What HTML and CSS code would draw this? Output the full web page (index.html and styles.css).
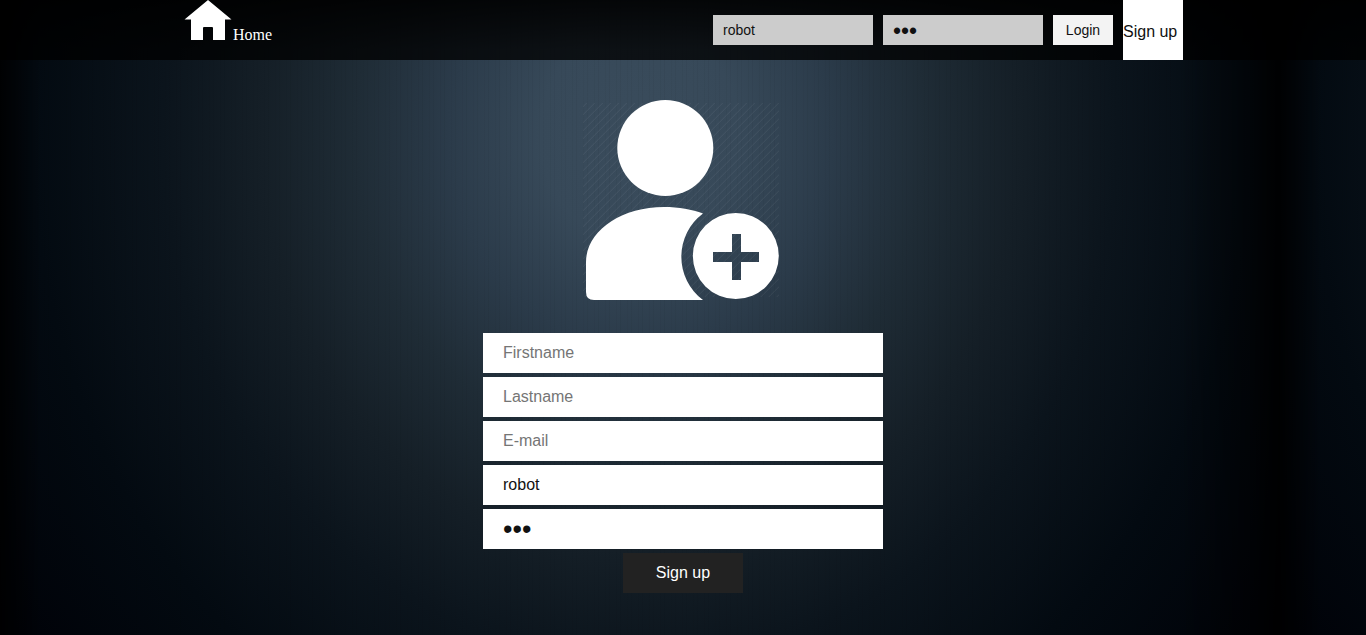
FILE: index.html
```html
<!DOCTYPE html>
<html lang="en">
<head>
<meta charset="utf-8">
<title>Sign up</title>
<link rel="stylesheet" href="styles.css">
</head>
<body>
<header class="topbar">
  <div class="topbar-inner">
    <a class="home"><svg class="home-icon" width="50" height="40" viewBox="0 0 50 40"><path fill="#fff" d="M25 0 48.500 19.500H42V40H30V28Q30 27 29 27H21Q20 27 20 28V40H8V19.500H1.500Z"/></svg><span>Home</span></a>
    <form class="login">
      <input class="login-field" type="text" value="robot">
      <input class="login-field login-password" type="password" value="abc">
      <button class="login-button" type="button">Login</button>
      <a class="signup-link">Sign up</a>
    </form>
  </div>
</header>
<main class="content">
  <svg class="user-icon" width="200" height="200" viewBox="0 0 200 200">
    <defs>
      <linearGradient id="hatch" gradientUnits="userSpaceOnUse" x1="0" y1="0" x2="4" y2="4" spreadMethod="repeat">
        <stop offset="0" stop-color="#fff" stop-opacity="0"/>
        <stop offset=".7" stop-color="#fff" stop-opacity="0"/>
        <stop offset=".85" stop-color="#fff" stop-opacity=".055"/>
        <stop offset="1" stop-color="#fff" stop-opacity="0"/>
      </linearGradient>
    </defs>
    <rect x="0" y="3" width="196" height="194" fill="url(#hatch)"/>
    <circle cx="82.300" cy="48" r="48" fill="#fff"/>
    <path fill="#fff" d="M3 162C3 132 37 107 81 107C96 107 109 109.500 120 113.500A54 54 0 0 0 120 200H11Q3 200 3 192Z"/>
    <path fill="#fff" fill-rule="evenodd" d="M152.800 113A43 43 0 0 1 152.800 199A43 43 0 0 1 152.800 113ZM149 134V152H130V162H149V180H158V162H176V152H158V134Z"/>
  </svg>
  <form class="signup">
    <input class="field" type="text" placeholder="Firstname">
    <input class="field" type="text" placeholder="Lastname">
    <input class="field" type="text" placeholder="E-mail">
    <input class="field" type="text" value="robot">
    <input class="field field-password" type="password" value="abc">
    <button class="signup-button" type="button">Sign up</button>
  </form>
</main>
</body>
</html>
```
FILE: styles.css
```css
* { box-sizing: border-box; }

html { height: 100%; }

body {
  margin: 0;
  height: 100%;
  overflow: hidden;
  font: 16px "Liberation Sans", Arial, sans-serif;
  background:
    linear-gradient(rgba(0, 0, 0, .6), transparent 50px),
    repeating-linear-gradient(90deg, rgba(0, 0, 0, .03) 0 1px, transparent 1px 4px, rgba(0, 0, 0, .04) 4px 5px, transparent 5px 11px),
    linear-gradient(90deg, rgba(0, 0, 0, .85), transparent 40px 1180px, rgba(0, 0, 0, .5) 1250px, rgba(0, 0, 0, .9) 1280px) 0 0 / 1280px 100% repeat-x,
    radial-gradient(ellipse 770px 850px at 640px 135px, #3a4c5c 0, #374959 13%, #2b3b4a 25%, #1f2c36 37%, #151f27 49%, #0b141c 62%, #030a11 79%, #000208 100%) 0 0 / 1280px 100% repeat-x;
}

input, button {
  border: 0;
  border-radius: 0;
  font-family: inherit;
}

.topbar {
  height: 60px;
  background: rgba(0, 0, 0, .77);
}

.topbar-inner {
  display: flex;
  justify-content: space-between;
  width: 1000px;
  margin: 0 auto;
}

.home {
  display: flex;
  align-items: baseline;
  height: 40px;
  color: #fff;
  font-family: "Liberation Serif", "Times New Roman", serif;
}

.login {
  display: flex;
  align-items: center;
  gap: 10px;
  height: 60px;
}

.login-field {
  width: 160px;
  height: 30px;
  padding: 0 10px;
  background: #ccc;
  color: #111;
  font-size: 14px;
}

.login-password {
  padding-top: 2px;
  font-size: 23px;
}

.login-button {
  width: 60px;
  height: 30px;
  padding: 0;
  background: #f3f3f3;
  color: #111;
  font-size: 14px;
}

.signup-link {
  width: 60px;
  height: 60px;
  line-height: 64px;
  background: #fff;
  color: #111;
}

.content {
  display: flex;
  flex-direction: column;
  align-items: center;
  gap: 33px;
  padding-top: 40px;
}

.signup {
  display: flex;
  flex-direction: column;
  align-items: center;
  gap: 4px;
}

.field {
  width: 400px;
  height: 40px;
  padding: 0 20px;
  background: #fff;
  color: #111;
  font-size: 16px;
}

.field-password { font-size: 27px; }

.field::placeholder { color: #757575; }

.signup-button {
  width: 120px;
  height: 40px;
  padding: 0;
  background: #222;
  color: #fff;
  font-size: 16px;
}
```
